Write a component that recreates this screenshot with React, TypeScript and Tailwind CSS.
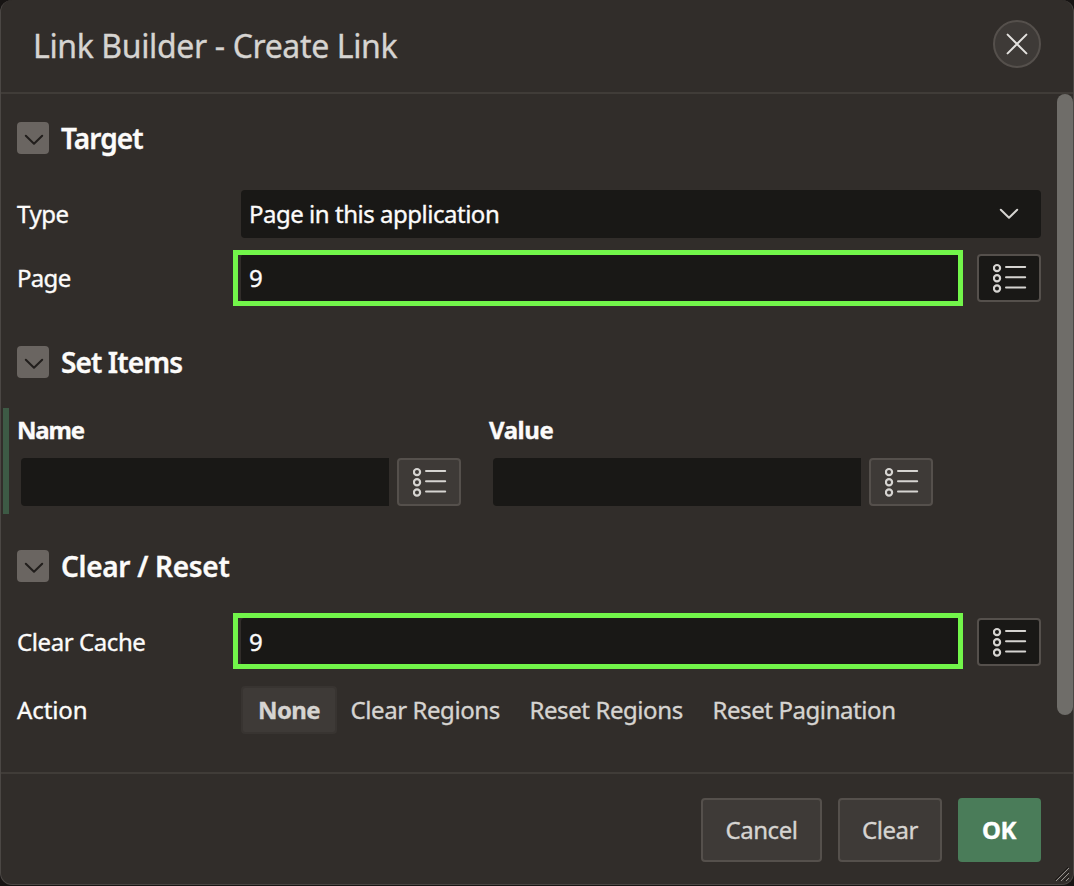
import React from "react";

function ListIcon() {
  return (
    <svg width="34" height="32" viewBox="0 0 34 32" fill="none" stroke="#d6d4d1" strokeWidth="2.2" className="ml-0.5">
      <circle cx="4" cy="6.1" r="3.1" />
      <circle cx="4" cy="16.3" r="3.1" />
      <circle cx="4" cy="26.5" r="3.1" />
      <path d="M13 5.1H32.2M13 15.3H32.2M13 25.5H32.2" strokeWidth="2" strokeLinecap="round" />
    </svg>
  );
}

function Chevron({ className }: { className: string }) {
  return (
    <svg width="20" height="12" viewBox="0 0 20 12" fill="none" strokeWidth="2" strokeLinecap="round" strokeLinejoin="round" className={className}>
      <path d="M1.8 1.7 10 9.8 18.2 1.7" />
    </svg>
  );
}

function ListButton({ dark = false }: { dark?: boolean }) {
  return (
    <button
      className={
        "flex h-12 w-16 shrink-0 items-center justify-center rounded border-2 border-[#55504c] " +
        (dark ? "bg-[#191816]" : "bg-[#3e3a37]")
      }
    >
      <ListIcon />
    </button>
  );
}

function Heading({ children, className }: { children: string; className: string }) {
  return (
    <div className="flex h-8 items-center">
      <button className="flex size-8 items-center justify-center rounded bg-[#6a6561]">
        <Chevron className="mt-[3px] ml-px stroke-[#211e1c]" />
      </button>
      <h2 className={"ml-3 text-[28px] leading-8 font-semibold whitespace-nowrap text-[#fcfbfa] " + className}>
        {children}
      </h2>
    </div>
  );
}

function HighlightedInput({ value, frameClass }: { value: string; frameClass: string }) {
  return (
    <div className="relative h-12 w-[720px] rounded bg-[#191816] pl-2 text-2xl leading-12">
      {value}
      <div className={"absolute -left-2 h-14 w-[730px] border-5 border-[#72f54a] " + frameClass} />
    </div>
  );
}

function ItemColumn({ label, className }: { label: string; className: string }) {
  return (
    <div className="w-[472px]">
      <div className={"h-[50px] text-2xl leading-[44px] font-bold " + className}>{label}</div>
      <div className="flex gap-2 pl-1">
        <div className="h-12 w-[368px] rounded-l bg-[#191816]" />
        <ListButton />
      </div>
    </div>
  );
}

export default function App() {
  return (
    <div className="h-[886px] w-[1074px] overflow-hidden bg-[#171413] font-['Noto_Sans','Open_Sans',sans-serif] text-2xl tracking-[-0.42px] text-[#fcfbfa] [-webkit-text-stroke:0.35px]">
      <div className="relative flex h-[885px] w-[1074px] flex-col rounded-xl border-x border-b border-[#4b4744] bg-[#312d2a]">
        <header className="flex h-[94px] items-center justify-between border-b-2 border-[#403c38] pr-8 pb-1 pl-8">
          <h1 className="mt-[3px] text-[32px] leading-10 tracking-[-0.37px] text-[#d6d4d1]">Link Builder - Create Link</h1>
          <button className="flex size-12 items-center justify-center rounded-full border-2 border-[#55504c] bg-[#3e3a37]">
            <svg width="22" height="22" viewBox="0 0 22 22" fill="none" stroke="#e4e2df" strokeWidth="2" strokeLinecap="round">
              <path d="M1.6 1.6 20.4 20.4M20.4 1.6 1.6 20.4" />
            </svg>
          </button>
        </header>

        <main className="flex h-[678px] justify-between">
          <div className="w-[1040px] pt-7 pl-4">
            <Heading className="tracking-[-0.9px]">Target</Heading>
            <div className="mt-9 flex h-12 items-center">
              <label className="w-56">Type</label>
              <div className="flex h-12 w-[800px] items-center justify-between rounded bg-[#191816] pr-[22px] pl-2 tracking-[-0.48px]">
                Page in this application
                <Chevron className="stroke-[#d6d4d1]" />
              </div>
            </div>
            <div className="mt-4 flex h-12 items-center">
              <label className="w-56 tracking-[-0.7px]">Page</label>
              <HighlightedInput value="9" frameClass="-top-1" />
              <div className="ml-4">
                <ListButton dark />
              </div>
            </div>

            <div className="mt-11">
              <Heading className="tracking-[-0.9px]">Set Items</Heading>
            </div>
            <div className="mt-[30px] -ml-3.5 flex h-[106px] border-l-6 border-[#3d5a45] pl-2">
              <ItemColumn label="Name" className="tracking-[-1.2px]" />
              <ItemColumn label="Value" className="tracking-[-0.45px]" />
            </div>

            <div className="mt-9">
              <Heading className="tracking-[-0.3px]">Clear / Reset</Heading>
            </div>
            <div className="mt-9 flex h-12 items-center">
              <label className="w-56">Clear Cache</label>
              <HighlightedInput value="9" frameClass="-top-[5px]" />
              <div className="ml-4">
                <ListButton dark />
              </div>
            </div>
            <div className="mt-5 flex h-12 items-center">
              <label className="w-56 tracking-[-0.1px]">Action</label>
              <div className="flex items-center text-[#d6d4d1]">
                <button className="h-12 w-24 rounded border-2 border-[#383431] bg-[#3e3a37] font-bold tracking-[-0.6px]">None</button>
                <span className="ml-[13.5px] w-[179px]">Clear Regions</span>
                <span className="w-[183px]">Reset Regions</span>
                <span>Reset Pagination</span>
              </div>
            </div>
          </div>
          <div className="h-[621px] w-4 rounded-full bg-[#6f6d69]" />
        </main>

        <footer className="flex h-[112px] justify-end gap-4 border-t-2 border-[#403c38] pt-6 pr-8 text-[#d6d4d1]">
          <button className="h-16 w-[121px] rounded border-2 border-[#55504c] bg-[#3e3a37]">Cancel</button>
          <button className="h-16 w-[104px] rounded border-2 border-[#55504c] bg-[#3e3a37]">Clear</button>
          <button className="h-16 w-[83px] rounded bg-[#4a7c59] pr-px font-bold text-white">OK</button>
        </footer>
        <svg className="absolute right-[3px] bottom-0.5" width="15" height="16" viewBox="0 0 15 16" fill="none" stroke="#96928e">
          <path d="M1 15 14 2M6 15 14 7M11 15 14 12" />
          <path d="M0 14 13 1M4 15 14 5M9 15 14 10" stroke="#1c1917" />
        </svg>
      </div>
    </div>
  );
}
